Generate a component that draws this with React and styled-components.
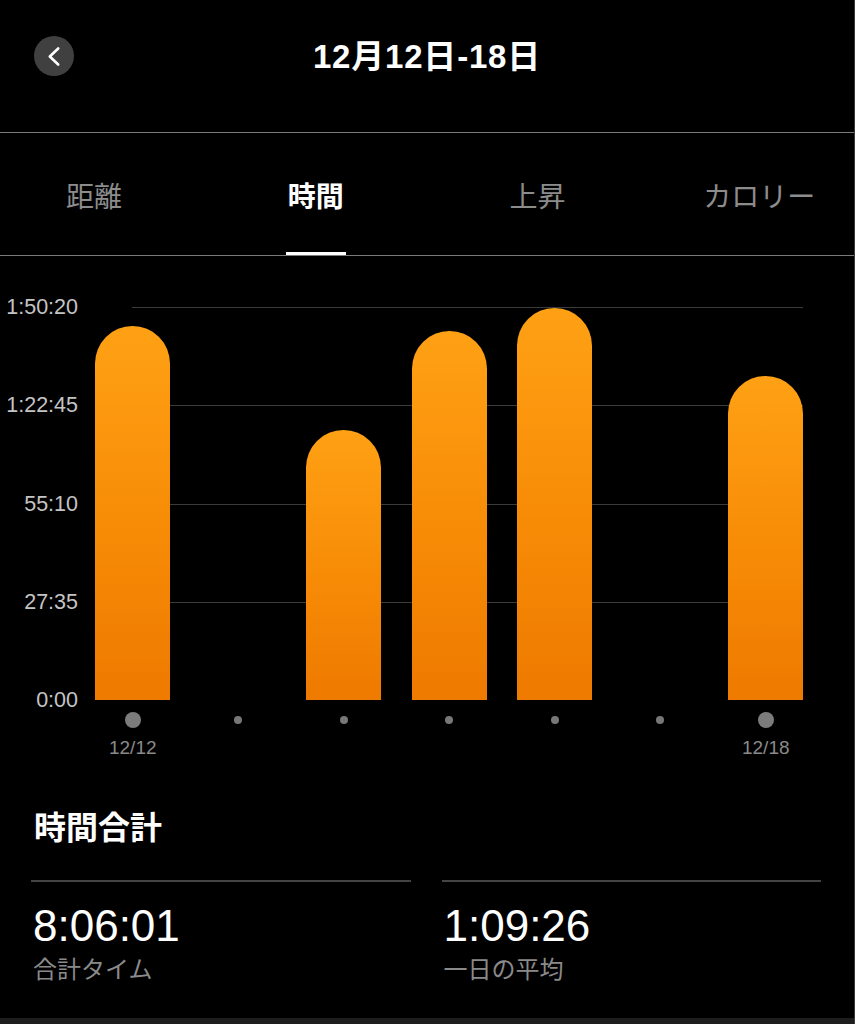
import React from "react";
import styled, { createGlobalStyle } from "styled-components";

const GlobalStyle = createGlobalStyle`
  * { box-sizing: border-box; }
  body {
    margin: 0;
    background: #000;
    font-family: "Liberation Sans", "Noto Sans CJK JP", sans-serif;
    color: #fff;
  }
`;

const tabs = ["距離", "時間", "上昇", "カロリー"];
const yLabels = ["1:50:20", "1:22:45", "55:10", "27:35", "0:00"];
// fraction of the chart height (max = 1:50:20)
const days = [
  { label: "12/12", value: 0.952, big: true },
  { label: "", value: 0 },
  { label: "", value: 0.687 },
  { label: "", value: 0.939 },
  { label: "", value: 0.998 },
  { label: "", value: 0 },
  { label: "12/18", value: 0.824, big: true },
];

const CHART_H = 393;
const COL_W = 105.5;

const App = () => {
  return (
    <Page>
      <GlobalStyle />
      <Header>
        <BackButton>
          <svg width="40" height="40" viewBox="0 0 40 40">
            <path
              d="M24.2 12.5 L15.8 20.5 L24.2 28.5"
              fill="none"
              stroke="#fff"
              strokeWidth="2.6"
              strokeLinecap="round"
              strokeLinejoin="round"
            />
          </svg>
        </BackButton>
        <Title>12月12日-18日</Title>
        <span />
      </Header>

      <Tabs>
        <TabRow>
          {tabs.map((t) => (
            <Tab key={t}>
              <TabLabel $active={t === "時間"}>{t}</TabLabel>
            </Tab>
          ))}
        </TabRow>
      </Tabs>

      <ChartSection>
        <ChartBody>
          <YAxis>
            {yLabels.map((l, i) => (
              <YLabel key={l} style={{ top: (i * CHART_H) / 4 }}>
                {l}
              </YLabel>
            ))}
          </YAxis>
          <Plot>
            {[0, 1, 2, 3].map((i) => (
              <GridLine key={i} style={{ top: (i * CHART_H) / 4 }} />
            ))}
            {days.map((d, i) => (
              <Column key={i}>
                {d.value > 0 && <Bar style={{ height: d.value * CHART_H }} />}
              </Column>
            ))}
          </Plot>
        </ChartBody>
        <XAxis>
          {days.map((d, i) => (
            <XCol key={i}>
              <DotSlot>
                <Dot $big={d.big} />
              </DotSlot>
              <DateLabel>{d.label}</DateLabel>
            </XCol>
          ))}
        </XAxis>
      </ChartSection>

      <Summary>
        <SummaryTitle>時間合計</SummaryTitle>
        <Stats>
          <Stat>
            <StatValue>8:06:01</StatValue>
            <StatLabel>合計タイム</StatLabel>
          </Stat>
          <Stat>
            <StatValue>1:09:26</StatValue>
            <StatLabel>一日の平均</StatLabel>
          </Stat>
        </Stats>
      </Summary>
      <BottomBar />
    </Page>
  );
};

export default App;

const Page = styled.div`
  width: 855px;
  min-height: 100vh;
  display: flex;
  flex-direction: column;
  background: #000;
  border-right: 1px solid #3a3a3a;
  overflow: hidden;
`;

const Header = styled.div`
  height: 133px;
  padding: 0 34px 18px;
  display: grid;
  grid-template-columns: 1fr auto 1fr;
  align-items: center;
  border-bottom: 1px solid #7a7a7a;
`;

const BackButton = styled.button`
  width: 40px;
  height: 40px;
  padding: 0;
  margin-top: -2px;
  border: none;
  border-radius: 50%;
  background: #404040;
  display: flex;
  align-items: center;
  justify-content: center;
  cursor: pointer;
`;

const Title = styled.div`
  font-size: 33px;
  line-height: 36px;
  font-weight: 700;
  letter-spacing: 0.8px;
  color: #fff;
  margin-top: -1px;
`;

const Tabs = styled.div`
  height: 123px;
  border-bottom: 1px solid #7a7a7a;
  overflow: hidden;
`;

const TabRow = styled.div`
  display: flex;
  margin-left: -17px;
  height: 100%;
`;

const Tab = styled.div`
  width: 221.8px;
  flex: none;
  display: flex;
  flex-direction: column;
  align-items: center;
  justify-content: flex-end;
`;

const TabLabel = styled.div`
  font-family: "Noto Sans CJK JP", sans-serif;
  font-size: 28px;
  line-height: 34px;
  padding: 0 2px 40px;
  font-weight: ${(p) => (p.$active ? 700 : 400)};
  color: ${(p) => (p.$active ? "#fff" : "#8c8c8c")};
  border-bottom: 3px solid ${(p) => (p.$active ? "#fff" : "transparent")};
`;

const ChartSection = styled.div`
  padding-top: 51px;
`;

const ChartBody = styled.div`
  display: flex;
`;

const YAxis = styled.div`
  position: relative;
  width: 80px;
  height: ${CHART_H}px;
`;

const YLabel = styled.div`
  position: absolute;
  right: 2px;
  transform: translateY(-50%);
  font-size: 21.5px;
  line-height: 24px;
  color: #c4c4c4;
  white-space: nowrap;
`;

const Plot = styled.div`
  position: relative;
  display: flex;
  align-items: flex-end;
  height: ${CHART_H}px;
`;

const GridLine = styled.div`
  position: absolute;
  left: 52px;
  width: 671px;
  height: 1px;
  background: #3b3b3b;
`;

const Column = styled.div`
  position: relative;
  z-index: 1;
  width: ${COL_W}px;
  flex: none;
  height: 100%;
  display: flex;
  justify-content: center;
  align-items: flex-end;
`;

const Bar = styled.div`
  width: 75px;
  border-radius: 37.5px 37.5px 0 0;
  background: linear-gradient(180deg, #ffa114 0%, #f78b06 55%, #ee7a00 100%);
`;

const XAxis = styled.div`
  display: flex;
  padding-left: 80px;
`;

const XCol = styled.div`
  width: ${COL_W}px;
  flex: none;
  display: flex;
  flex-direction: column;
  align-items: center;
`;

const DotSlot = styled.div`
  height: 40px;
  display: flex;
  align-items: center;
  justify-content: center;
`;

const Dot = styled.div`
  width: ${(p) => (p.$big ? 16 : 8)}px;
  height: ${(p) => (p.$big ? 16 : 8)}px;
  border-radius: 50%;
  background: ${(p) => (p.$big ? "#7c7c7c" : "#777")};
`;

const DateLabel = styled.div`
  height: 16px;
  font-size: 19px;
  line-height: 16px;
  color: #8a8a8a;
`;

const Summary = styled.div`
  flex: 1;
  padding: 49px 33px 0 31px;
`;

const SummaryTitle = styled.div`
  font-family: "Noto Sans CJK JP", sans-serif;
  font-size: 32px;
  line-height: 40px;
  font-weight: 700;
  padding-left: 3px;
  margin-bottom: 35px;
`;

const Stats = styled.div`
  display: grid;
  grid-template-columns: 1fr 1fr;
  column-gap: 31px;
`;

const Stat = styled.div`
  border-top: 2px solid #444;
  padding: 19px 0 0 2px;
`;

const StatValue = styled.div`
  font-size: 44px;
  line-height: 50px;
  color: #fff;
`;

const StatLabel = styled.div`
  font-family: "Noto Sans CJK JP", sans-serif;
  font-size: 24px;
  line-height: 30px;
  margin-top: 2px;
  color: #8a8a8a;
`;

const BottomBar = styled.div`
  height: 6px;
  background: #1e1e1e;
`;
